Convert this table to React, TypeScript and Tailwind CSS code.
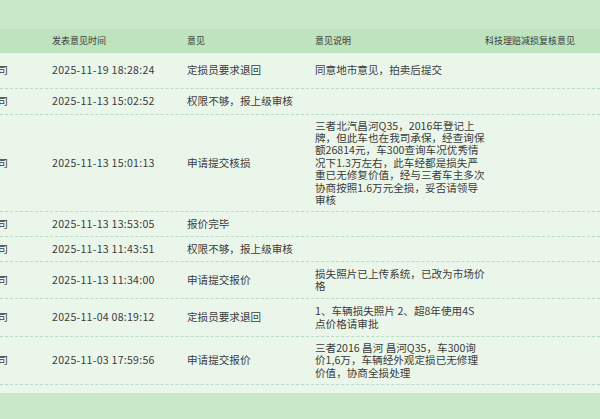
import React from "react";

type Row = { h: string; time: string; op: string; desc?: React.ReactNode };

const rows: Row[] = [
  { h: "h-[36px]", time: "2025-11-19 18:28:24", op: "定损员要求退回", desc: "同意地市意见，拍卖后提交" },
  { h: "h-[26px]", time: "2025-11-13 15:02:52", op: "权限不够，报上级审核" },
  {
    h: "h-[97px]",
    time: "2025-11-13 15:01:13",
    op: "申请提交核损",
    desc: "三者北汽昌河Q35，2016年登记上牌，但此车也在我司承保，经查询保额26814元，车300查询车况优秀情况下1.3万左右，此车经都是损失严重已无修复价值，经与三者车主多次协商按照1.6万元全损，妥否请领导审核",
  },
  { h: "h-[25px]", time: "2025-11-13 13:53:05", op: "报价完毕" },
  { h: "h-[25px]", time: "2025-11-13 11:43:51", op: "权限不够，报上级审核" },
  { h: "h-[37px]", time: "2025-11-13 11:34:00", op: "申请提交报价", desc: "损失照片已上传系统，已改为市场价格" },
  {
    h: "h-[38px]",
    time: "2025-11-04 08:19:12",
    op: "定损员要求退回",
    desc: (
      <>
        1、车辆损失照片 2、超8年使用4S
        <br />
        点价格请审批
      </>
    ),
  },
  {
    h: "h-[48px]",
    time: "2025-11-03 17:59:56",
    op: "申请提交报价",
    desc: "三者2016 昌河 昌河Q35，车300询价1,6万，车辆经外观定损已无修理价值，协商全损处理",
  },
];

const grid = "grid grid-cols-[52px_135px_128px_170.5px_1fr]";

export default function App() {
  return (
    <div
      className="relative w-[600px] h-[419px] overflow-hidden bg-[#c9e8c9] text-[#3b3b3b]"
      style={{ fontFamily: '"Noto Sans CJK SC", "Noto Sans", sans-serif' }}
    >
      <div className="h-[29px]" />
      <div className="grid grid-cols-[52px_135px_128px_170px_1fr] h-[24px] items-center bg-[#bfe3bf] text-[9px] text-[#3a3a3a]">
        <div />
        <div>发表意见时间</div>
        <div>意见</div>
        <div>意见说明</div>
        <div>科技理赔减损复核意见</div>
      </div>
      <div className="bg-[#ebf6eb] pb-[8px]">
        {rows.map((r, i) => (
          <div
            key={i}
            className={`${grid} ${r.h} items-center border-b border-dashed border-[#b9d9c6] text-[10.6px] leading-[12.4px]`}
          >
            <div className="flex justify-end overflow-hidden pr-[44px] whitespace-nowrap">保定分公司</div>
            <div className="whitespace-nowrap tracking-[0.25px]">{r.time}</div>
            <div className="whitespace-nowrap">{r.op}</div>
            <div className="break-all">{r.desc ?? ""}</div>
            <div />
          </div>
        ))}
      </div>
    </div>
  );
}
